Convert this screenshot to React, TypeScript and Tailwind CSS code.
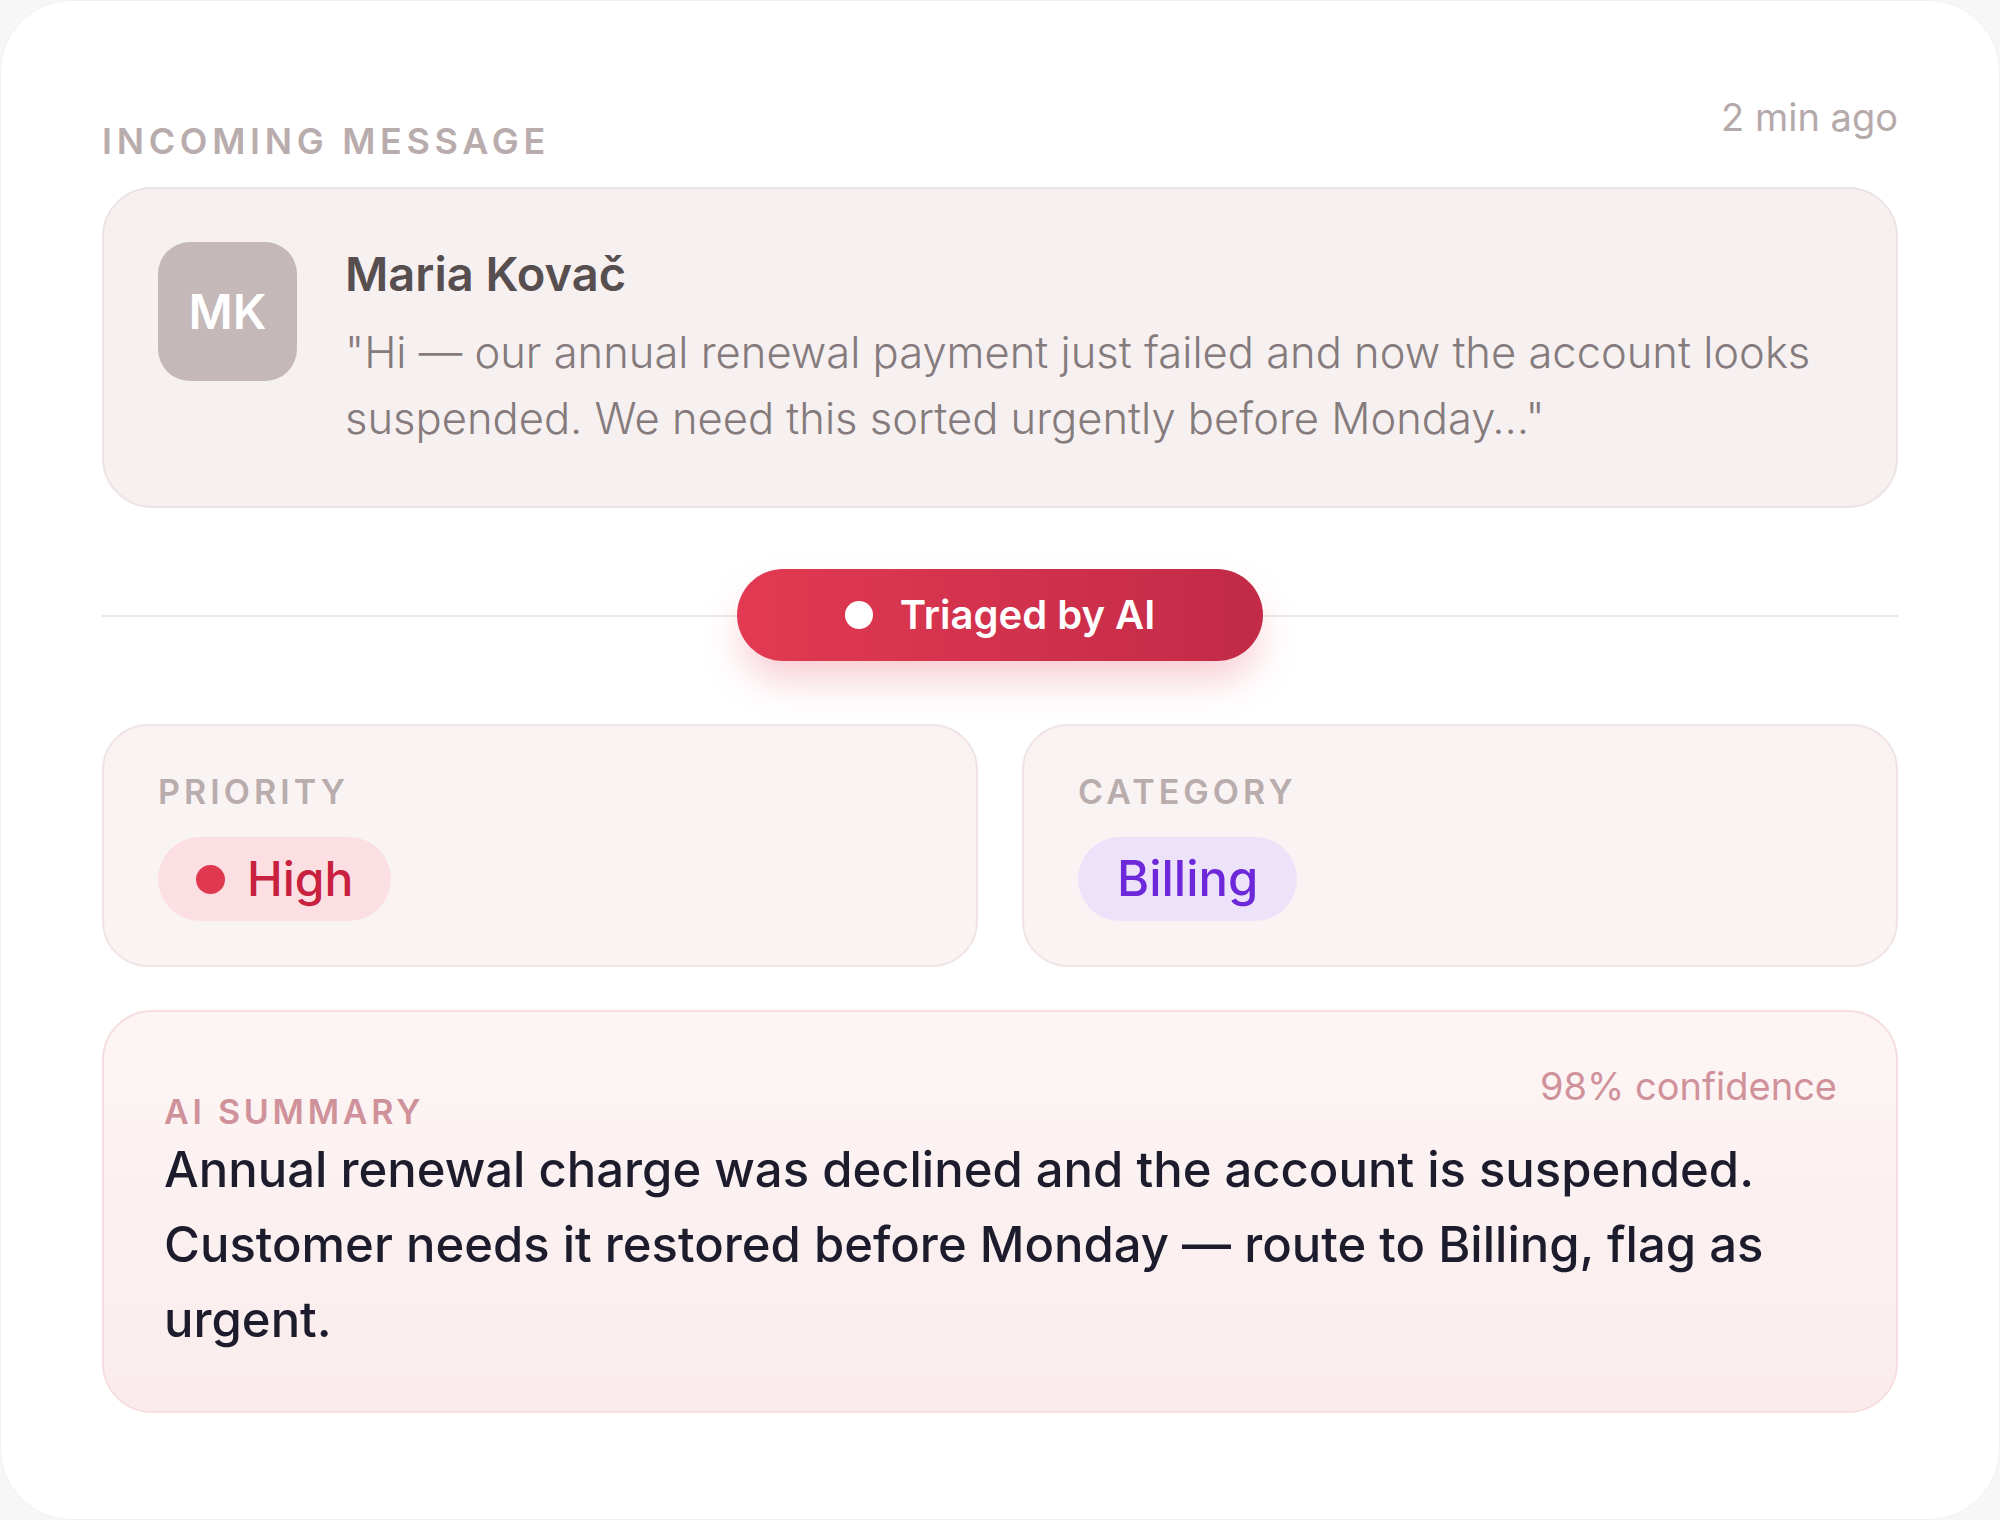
const labelCls =
  "text-[34px] leading-[41px] font-semibold tracking-[0.12em] uppercase text-[#b9acad]";

function Chip({ tone, children }: { tone: "red" | "violet"; children: React.ReactNode }) {
  const red = tone === "red";
  return (
    <span
      className={
        red
          ? "inline-flex h-[84px] items-center gap-[22px] rounded-full bg-[#fcdfe3] px-[38px] text-[48px] font-medium text-[#c8213f]"
          : "inline-flex h-[84px] items-center rounded-full bg-[#ece2fa] px-[39px] text-[49px] font-medium text-[#6d28d9]"
      }
    >
      {red && <span className="h-[29px] w-[29px] rounded-full bg-[#e0384f]" />}
      {children}
    </span>
  );
}

function Field({ label, children }: { label: string; children: React.ReactNode }) {
  return (
    <div className="flex flex-col gap-[25px] rounded-[46px] border-2 border-[#f0e4e5] bg-[#f9f3f3] px-[54px] pt-[45px] pb-[44px]">
      <div className={labelCls}>{label}</div>
      <div className="flex">{children}</div>
    </div>
  );
}

export default function App() {
  return (
    <div className="min-h-screen bg-[#f7f7f7] font-['Inter',sans-serif]">
      <div className="flex h-[1520px] w-[2000px] flex-col rounded-[72px] border border-[#f1f1f1] bg-white px-[101px] pt-[93px]">
        {/* header */}
        <div className="flex items-start justify-between">
          <div className="mt-[26px] text-[36px] leading-[43px] font-semibold tracking-[0.13em] uppercase text-[#b9acad]">
            Incoming message
          </div>
          <div className="text-[38px] leading-[46px] text-[#b5a9aa]">2 min ago</div>
        </div>

        {/* message */}
        <div className="mt-[24px] flex gap-[48px] rounded-[50px] border-2 border-[#ece3e3] bg-[#f6f0f0] px-[54px] pt-[53px] pb-[55px]">
          <div className="flex h-[139px] w-[139px] shrink-0 items-center justify-center rounded-[32px] bg-[#c4b8b9] text-[48px] font-semibold text-white">
            MK
          </div>
          <div className="flex flex-col pt-[4px]">
            <div className="text-[47px] leading-[55px] font-semibold text-[#574e4f]">Maria Kovač</div>
            <p className="mt-[18px] text-[43.5px] leading-[66px] font-light text-[#857b7c]">
              "Hi — our annual renewal payment just failed and now the account looks suspended. We need this
              sorted urgently before Monday…"
            </p>
          </div>
        </div>

        {/* triage divider */}
        <div className="relative mt-[61px] flex h-[92px] items-center justify-center">
          <div className="absolute inset-x-0 top-1/2 h-[2px] bg-[#efe6e6]" />
          <div className="relative flex h-[92px] w-[526px] items-center justify-center gap-[27px] rounded-full bg-gradient-to-r from-[#e23a52] to-[#c22a47] text-[40px] font-semibold text-white shadow-[0_22px_40px_-6px_rgba(226,58,82,0.28)]">
            <span className="h-[28px] w-[28px] rounded-full bg-white" />
            Triaged by AI
          </div>
        </div>

        {/* fields */}
        <div className="mt-[63px] grid grid-cols-2 gap-[44px]">
          <Field label="Priority">
            <Chip tone="red">High</Chip>
          </Field>
          <Field label="Category">
            <Chip tone="violet">Billing</Chip>
          </Field>
        </div>

        {/* summary */}
        <div className="mt-[43px] rounded-[50px] border-2 border-[#f6dde0] bg-gradient-to-b from-[#fdf5f5] to-[#faeced] pl-[60px] pr-[59px] pt-[54px] pb-[54px]">
          <div className="flex items-start justify-between">
            <div className="mt-[25px] text-[34px] leading-[41px] font-semibold tracking-[0.11em] uppercase text-[#d0929a]">
              AI Summary
            </div>
            <div className="text-[38px] leading-[41px] text-[#d0929a]">98% confidence</div>
          </div>
          <p className="text-[49px] leading-[75px] font-medium text-[#1d1c2c]">
            Annual renewal charge was declined and the account is suspended. Customer needs it restored before
            Monday — route to Billing, flag as urgent.
          </p>
        </div>
      </div>
    </div>
  );
}
